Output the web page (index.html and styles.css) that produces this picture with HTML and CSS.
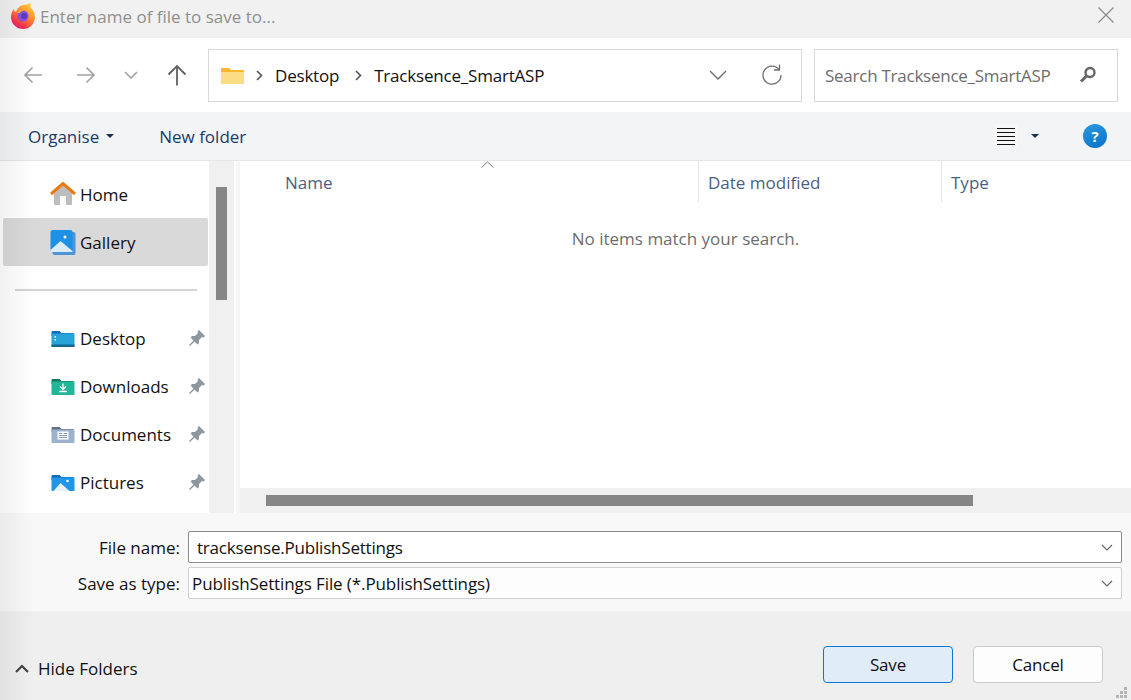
FILE: index.html
```html
<!DOCTYPE html>
<html lang="en">
<head>
  <meta charset="UTF-8">
  <title>Enter name of file to save to...</title>
  <link rel="stylesheet" href="styles.css">
</head>
<body>
  <div class="dialog">
    <!-- title bar -->
    <div class="titlebar">
      <svg class="fx-logo" width="26" height="28" viewBox="0 0 26 28">
        <defs>
          <linearGradient id="fxBody" x1="0.8" y1="0" x2="0.2" y2="1">
            <stop offset="0" stop-color="#ffd23c"/>
            <stop offset="0.45" stop-color="#ff8a2b"/>
            <stop offset="0.8" stop-color="#f5304f"/>
            <stop offset="1" stop-color="#e5208f"/>
          </linearGradient>
        </defs>
        <path d="M20 2c1 2 0 4 1 5 3 3 4 6 4 9a12 12 0 0 1-24 0c0-3 1-6 3-8 0 2 1 3 2 3 1-3 3-6 7-7 3 0 5-1 7-2z" fill="url(#fxBody)"/>
        <circle cx="13" cy="15" r="5.500" fill="#8a4fe0"/>
        <circle cx="14" cy="15" r="3" fill="#5a3cc0"/>
        <path d="M7 12c2-3 6-4 9-3-3 0-5 1-6 3z" fill="#ffb43a"/>
      </svg>
      <span class="title-text">Enter name of file to save to...</span>
      <svg class="close" width="16" height="16" viewBox="0 0 16 16"><path d="M0.500 0.500l15 15M15.500 0.500l-15 15" stroke="#8a8a8a" stroke-width="1.200" fill="none"/></svg>
    </div>

    <!-- back / forward / address / search -->
    <div class="navbar">
      <div class="nav-buttons">
        <svg class="nav-back" width="20" height="18" viewBox="0 0 20 18"><path d="M19 9H2M9.500 1.500L2 9l7.500 7.500" stroke="#a3a3a3" stroke-width="1.700" fill="none"/></svg>
        <svg class="nav-forward" width="20" height="18" viewBox="0 0 20 18"><path d="M1 9h17M10.500 1.500L18 9l-7.500 7.500" stroke="#a3a3a3" stroke-width="1.700" fill="none"/></svg>
        <svg class="nav-recent" width="14" height="9" viewBox="0 0 14 9"><path d="M1 1l6 6 6-6" stroke="#a3a3a3" stroke-width="1.600" fill="none"/></svg>
        <svg class="nav-up" width="20" height="22" viewBox="0 0 20 22"><path d="M10 21.500V2M1.500 10.500L10 2l8.500 8.500" stroke="#606060" stroke-width="1.800" fill="none"/></svg>
      </div>
      <div class="address">
        <svg class="addr-folder" width="23" height="17" viewBox="0 0 23 17">
          <path d="M0 2a1 1 0 0 1 1-1h7l2 2h12a1 1 0 0 1 1 1v12a1 1 0 0 1-1 1H1a1 1 0 0 1-1-1z" fill="#f5b82e"/>
          <path d="M0 5h23v11a1 1 0 0 1-1 1H1a1 1 0 0 1-1-1z" fill="#fcdd85"/>
        </svg>
        <svg class="crumb-sep" width="7" height="11" viewBox="0 0 7 11"><path d="M1 1l4.500 4.500L1 10" stroke="#555" stroke-width="1.600" fill="none"/></svg>
        <span class="crumb">Desktop</span>
        <svg class="crumb-sep" width="7" height="11" viewBox="0 0 7 11"><path d="M1 1l4.500 4.500L1 10" stroke="#555" stroke-width="1.600" fill="none"/></svg>
        <span class="crumb">Tracksence_SmartASP</span>
        <svg class="addr-down" width="18" height="10" viewBox="0 0 18 10"><path d="M1 1l8 8 8-8" stroke="#6a6a6a" stroke-width="1.300" fill="none"/></svg>
        <svg class="addr-refresh" width="22" height="22" viewBox="0 0 22 22"><path d="M18 5.500A9 9 0 1 0 20 11" stroke="#6e6e6e" stroke-width="1.300" fill="none"/><path d="M18.500 0.500v5.500H13" stroke="#6e6e6e" stroke-width="1.300" fill="none"/></svg>
      </div>
      <div class="search">
        <span class="search-text">Search Tracksence_SmartASP</span>
        <svg width="18" height="18" viewBox="0 0 18 18"><circle cx="11" cy="6.500" r="4.500" stroke="#666" stroke-width="2.400" fill="none"/><path d="M7.500 10L2 15.500" stroke="#666" stroke-width="3"/></svg>
      </div>
    </div>

    <!-- command bar -->
    <div class="toolbar">
      <span class="cmd">Organise</span>
      <svg class="caret cmd-caret" width="8" height="4" viewBox="0 0 8 4"><path d="M0 0h8L4 4z"/></svg>
      <span class="cmd cmd-new">New folder</span>
      <div class="toolbar-right">
        <div class="view-btn"><span></span><span></span><span></span><span></span><span></span></div>
        <svg class="caret view-caret" width="8" height="4" viewBox="0 0 8 4"><path d="M0 0h8L4 4z"/></svg>
        <div class="help">?</div>
      </div>
    </div>

    <div class="main">
      <!-- folder tree -->
      <div class="sidebar">
        <div class="tree-item">
          <svg width="26" height="24" viewBox="0 0 26 24">
            <path d="M4 11l9-8 9 8v11a1 1 0 0 1-1 1H5a1 1 0 0 1-1-1z" fill="#bdbdbd"/>
            <path d="M10 23v-8a1 1 0 0 1 1-1h4a1 1 0 0 1 1 1v8z" fill="#fff"/>
            <path d="M1 12L13 1.500 25 12" stroke="#ea7a10" stroke-width="3" fill="none"/>
          </svg>
          <span>Home</span>
        </div>
        <div class="tree-item selected">
          <svg width="25" height="25" viewBox="0 0 25 25">
            <rect x="2" y="2" width="23" height="23" rx="2" fill="#4f93d8"/>
            <rect width="22" height="22" rx="2" fill="#1e90e6"/>
            <circle cx="14.500" cy="7" r="1.500" fill="#fff"/>
            <path d="M0 20l10-9 12 10v1H0z" fill="#dcebf8"/>
          </svg>
          <span>Gallery</span>
        </div>
        <div class="tree-divider"></div>
        <div class="tree-item pinned">
          <svg width="23" height="17" viewBox="0 0 23 17">
            <path d="M0 2a1 1 0 0 1 1-1h7l2 2h12v3H0z" fill="#0f6cbd"/>
            <path d="M0 3.500h22a1 1 0 0 1 1 1V16a1 1 0 0 1-1 1H1a1 1 0 0 1-1-1z" fill="#27a3d8"/>
            <rect x="3" y="6" width="1.500" height="1.500" fill="#fff"/><rect x="3" y="9" width="1.500" height="1.500" fill="#fff"/>
            <rect x="0" y="14.500" width="23" height="2.500" fill="#12688f"/>
          </svg>
          <span>Desktop</span>
          <svg class="pin" width="16" height="16" viewBox="0 0 16 16"><path d="M10 0l6 6-1.500 1.500L13 7l-3 3v3l-1.500 1.500-3-3L1 16l-1-1 4.500-4.500-3-3L3 6h3l3-3-.5-1.500z" fill="#8f979e"/></svg>
        </div>
        <div class="tree-item pinned">
          <svg width="23" height="17" viewBox="0 0 23 17">
            <path d="M0 2a1 1 0 0 1 1-1h7l2 2h12v3H0z" fill="#0b7a5e"/>
            <path d="M0 3.500h22a1 1 0 0 1 1 1V16a1 1 0 0 1-1 1H1a1 1 0 0 1-1-1z" fill="#22b596"/>
            <path d="M11.500 5.500v5.500M8.500 8.500l3 3 3-3M7.500 13.500h8" stroke="#fff" stroke-width="1.300" fill="none"/>
          </svg>
          <span>Downloads</span>
          <svg class="pin" width="16" height="16" viewBox="0 0 16 16"><path d="M10 0l6 6-1.500 1.500L13 7l-3 3v3l-1.500 1.500-3-3L1 16l-1-1 4.500-4.500-3-3L3 6h3l3-3-.5-1.500z" fill="#8f979e"/></svg>
        </div>
        <div class="tree-item pinned">
          <svg width="23" height="17" viewBox="0 0 23 17">
            <path d="M0 2a1 1 0 0 1 1-1h7l2 2h12v3H0z" fill="#5f7488"/>
            <path d="M0 3.500h22a1 1 0 0 1 1 1V16a1 1 0 0 1-1 1H1a1 1 0 0 1-1-1z" fill="#9db2cc"/>
            <path d="M6 5.500h11v8H6z" fill="#fff"/>
            <path d="M7.500 7.500h3M12 7.500h3.500M7.500 9.500h8M7.500 11.500h8" stroke="#8099b5" stroke-width="1"/>
          </svg>
          <span>Documents</span>
          <svg class="pin" width="16" height="16" viewBox="0 0 16 16"><path d="M10 0l6 6-1.500 1.500L13 7l-3 3v3l-1.500 1.500-3-3L1 16l-1-1 4.500-4.500-3-3L3 6h3l3-3-.5-1.500z" fill="#8f979e"/></svg>
        </div>
        <div class="tree-item pinned">
          <svg width="23" height="17" viewBox="0 0 23 17">
            <path d="M0 2a1 1 0 0 1 1-1h7l2 2h12v3H0z" fill="#0f6cbd"/>
            <path d="M0 3.500h22a1 1 0 0 1 1 1V16a1 1 0 0 1-1 1H1a1 1 0 0 1-1-1z" fill="#1f96e8"/>
            <circle cx="16" cy="7" r="1.300" fill="#fff"/>
            <path d="M2 17l7-8 9 8z" fill="#e6f1fa"/>
          </svg>
          <span>Pictures</span>
          <svg class="pin" width="16" height="16" viewBox="0 0 16 16"><path d="M10 0l6 6-1.500 1.500L13 7l-3 3v3l-1.500 1.500-3-3L1 16l-1-1 4.500-4.500-3-3L3 6h3l3-3-.5-1.500z" fill="#8f979e"/></svg>
        </div>
      </div>
      <div class="v-scroll"><div class="v-thumb"></div></div>

      <!-- file list -->
      <div class="files">
        <div class="file-list">
          <div class="col-head">
            <div class="col col-name">Name
              <svg class="sort-arrow" width="13" height="7" viewBox="0 0 13 7"><path d="M0.500 6.500l6-5.500 6 5.500" stroke="#777" stroke-width="1" fill="none"/></svg>
            </div>
            <div class="col col-date">Date modified</div>
            <div class="col col-type">Type</div>
          </div>
          <div class="empty">No items match your search.</div>
        </div>
        <div class="h-scroll"><div class="h-thumb"></div></div>
      </div>
    </div>

    <!-- file name and type -->
    <div class="form">
      <div class="form-row">
        <label class="form-label">File name:</label>
        <div class="field field-name">
          <span>tracksense.PublishSettings</span>
          <svg width="12" height="7" viewBox="0 0 12 7"><path d="M1 1l5 5 5-5" stroke="#666" stroke-width="1.100" fill="none"/></svg>
        </div>
      </div>
      <div class="form-row">
        <label class="form-label">Save as type:</label>
        <div class="field field-type">
          <span>PublishSettings File (*.PublishSettings)</span>
          <svg width="12" height="7" viewBox="0 0 12 7"><path d="M1 1l5 5 5-5" stroke="#666" stroke-width="1.100" fill="none"/></svg>
        </div>
      </div>
    </div>

    <div class="footer">
      <div class="hide-folders">
        <svg width="14" height="9" viewBox="0 0 14 9"><path d="M1 8l6-6 6 6" stroke="#444" stroke-width="2.200" fill="none"/></svg>
        <span>Hide Folders</span>
      </div>
      <div class="actions">
        <button class="btn btn-primary">Save</button>
        <button class="btn">Cancel</button>
      </div>
      <svg class="grip" width="13" height="13" viewBox="0 0 13 13" fill="#b5b5b5">
        <rect x="9" y="0" width="3" height="3"/><rect x="5" y="4" width="3" height="3"/><rect x="9" y="4" width="3" height="3"/>
        <rect x="1" y="8" width="3" height="3"/><rect x="5" y="8" width="3" height="3"/><rect x="9" y="8" width="3" height="3"/>
      </svg>
    </div>

    <div class="edge-shade"></div>
  </div>
</body>
</html>
```

FILE: styles.css
```css
* {
  box-sizing: border-box;
}
html, body {
  margin: 0;
  height: 100%;
  overflow: hidden;
}
body {
  font-family: 'Open Sans', 'Noto Sans', sans-serif;
  font-size: 17px;
  color: #1a1a1a;
  background: #fff;
}
svg {
  flex: none;
  display: block;
}
.dialog {
  position: relative;
  width: 1131px;
  height: 700px;
  display: flex;
  flex-direction: column;
}
.edge-shade {
  position: absolute;
  left: 0;
  top: 0;
  bottom: 0;
  width: 34px;
  background: linear-gradient(90deg, rgba(0,0,0,0.055), rgba(0,0,0,0));
  pointer-events: none;
}

/* title bar */
.titlebar {
  height: 38px;
  background: #f1f1f1;
  display: flex;
  align-items: center;
  padding: 0 17px 0 10px;
}
.fx-logo {
  margin-top: -8px;
}
.title-text {
  margin-left: 4px;
  margin-top: -6px;
  color: #8f8f8f;
  flex: 1;
}
.close {
  margin-top: -8px;
}

/* nav row */
.navbar {
  height: 74px;
  background: #fff;
  display: flex;
  align-items: center;
  padding-right: 13px;
}
.nav-buttons {
  width: 208px;
  display: flex;
  align-items: center;
  padding-left: 23px;
}
.nav-forward {
  margin-left: 33px;
}
.nav-recent {
  margin-left: 28px;
}
.nav-up {
  margin-left: 29px;
}
.address, .search {
  height: 53px;
  border: 1px solid #d9d9d9;
  display: flex;
  align-items: center;
}
.address {
  width: 594px;
  padding: 0 18px 0 12px;
}
.addr-folder {
  margin-right: 12px;
}
.crumb {
  margin: 0 16px 0 12px;
  color: #111;
  letter-spacing: -0.2px;
}
.addr-down {
  margin-left: auto;
}
.addr-refresh {
  margin-left: 34px;
}
.search {
  width: 304px;
  margin-left: 12px;
  padding: 0 20px 0 10px;
  justify-content: space-between;
}
.search-text {
  color: #6d6d6d;
  letter-spacing: -0.25px;
}

/* command bar */
.toolbar {
  height: 49px;
  background: #f3f4f6;
  border-bottom: 1px solid #e6e6e6;
  display: flex;
  align-items: center;
  padding: 0 24px 0 28px;
}
.cmd {
  color: #1c3a66;
}
.caret {
  fill: #1c2f52;
}
.cmd-caret {
  margin-left: 7px;
}
.cmd-new {
  margin-left: 45px;
}
.toolbar-right {
  margin-left: auto;
  display: flex;
  align-items: center;
}
.view-btn {
  width: 24px;
  height: 24px;
  background: #f7f7f7;
  display: flex;
  flex-direction: column;
  justify-content: center;
  gap: 3px;
  padding: 0 3px;
}
.view-btn span {
  display: block;
  height: 1px;
  background: #111;
}
.view-caret {
  margin-left: 13px;
}
.help {
  width: 24px;
  height: 24px;
  margin-left: 44px;
  border-radius: 50%;
  background: linear-gradient(160deg, #2a9be0, #0a6fc8);
  color: #fff;
  font-weight: 700;
  font-size: 15px;
  line-height: 24px;
  text-align: center;
}

/* main split */
.main {
  height: 352px;
  display: flex;
  background: #fff;
}
.sidebar {
  width: 209px;
  padding-top: 9px;
  overflow: hidden;
}
.tree-item {
  height: 48px;
  margin: 0 1px 0 3px;
  padding-left: 47px;
  display: flex;
  align-items: center;
  border-radius: 2px;
  color: #111;
}
.tree-item span {
  margin-left: 4px;
}
.tree-item svg:first-child {
  width: 26px;
}
.tree-item.selected {
  background: #d9d9d9;
}
.tree-item .pin {
  margin-left: auto;
  margin-right: 3px;
}
.tree-divider {
  height: 2px;
  margin: 23px 12px 23px 15px;
  background: #d4d4d4;
}
.v-scroll {
  width: 25px;
  background: #f0f0f0;
  padding: 26px 7px 0;
}
.v-thumb {
  width: 11px;
  height: 113px;
  background: #868686;
}
.files {
  flex: 1;
  margin-left: 2px;
  border-left: 4px solid #f6f6f6;
  display: flex;
  flex-direction: column;
}
.file-list {
  flex: 1;
}
.col-head {
  height: 41px;
  display: flex;
}
.col {
  position: relative;
  height: 41px;
  padding: 10px 0 0 9px;
  color: #4a5f80;
  border-right: 1px solid #e5e5e5;
}
.col-name {
  width: 459px;
  padding-left: 45px;
}
.col-date {
  width: 243px;
}
.col-type {
  flex: 1;
  border-right: 0;
}
.sort-arrow {
  position: absolute;
  left: 241px;
  top: 0;
}
.empty {
  margin-top: 25px;
  text-align: center;
  color: #6d6d6d;
}
.h-scroll {
  height: 25px;
  background: #f0f0f0;
  padding: 7px 0 0 26px;
}
.h-thumb {
  width: 707px;
  height: 11px;
  background: #868686;
}

/* file name form */
.form {
  height: 98px;
  background: #f8f8f8;
  padding: 18px 9px 0 0;
  display: flex;
  flex-direction: column;
  gap: 4px;
}
.form-row {
  display: flex;
  align-items: center;
}
.form-label {
  width: 180px;
  text-align: right;
  color: #111;
}
.field {
  flex: 1;
  height: 32px;
  margin-left: 8px;
  border-radius: 2px;
  display: flex;
  align-items: center;
  justify-content: space-between;
  padding-right: 8px;
  color: #111;
  letter-spacing: -0.2px;
}
.field-name {
  background: #fff;
  border: 1px solid #8a8a8a;
  padding-left: 8px;
}
.field-type {
  background: #fdfdfd;
  border: 1px solid #cfcfcf;
  padding-left: 3px;
  letter-spacing: -0.1px;
}

/* footer */
.footer {
  position: relative;
  flex: 1;
  background: #efefef;
  display: flex;
  align-items: center;
  justify-content: space-between;
  padding: 0 28px 0 15px;
}
.hide-folders {
  display: flex;
  align-items: center;
  gap: 9px;
  color: #111;
  margin-top: 25px;
}
.actions {
  display: flex;
  gap: 20px;
  margin-top: 17px;
}
.btn {
  width: 130px;
  height: 37px;
  border: 1px solid #c9c9c9;
  border-radius: 4px;
  background: #fdfdfd;
  font: inherit;
  color: #111;
  letter-spacing: -0.2px;
  padding: 0;
}
.btn-primary {
  background: #e0edf9;
  border-color: #0a78d4;
}
.grip {
  position: absolute;
  right: 3px;
  bottom: 0;
}
```
